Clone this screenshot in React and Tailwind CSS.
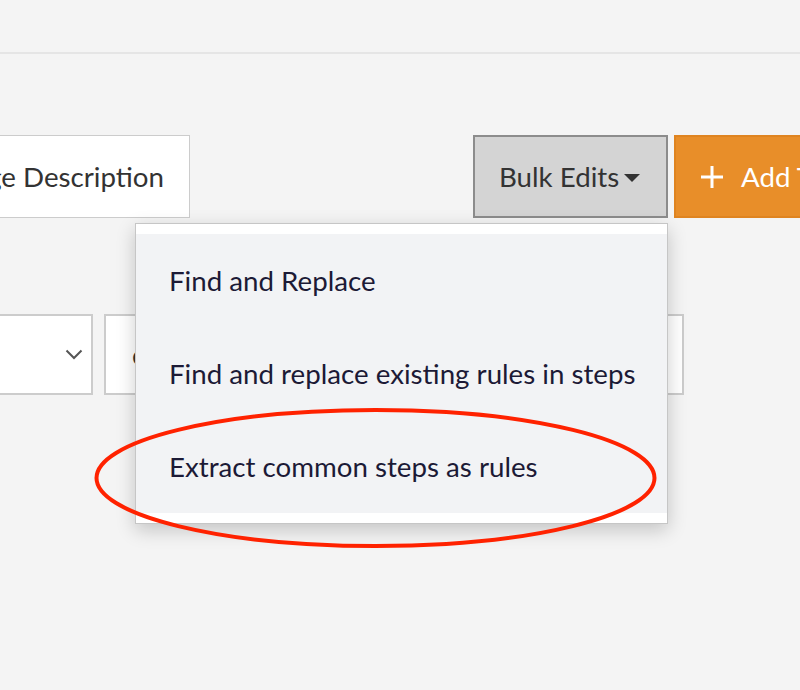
import React from "react";

const Caret = () => (
    <svg width="16" height="9" viewBox="0 0 16 9" className="ml-[5px] mt-[4px] shrink-0">
        <path d="M0 0 L16 0 L8 8 Z" fill="#333333" />
    </svg>
);

const Chevron = () => (
    <svg width="18" height="11" viewBox="0 0 18 11">
        <path d="M1.5 1.5 L9 9 L16.5 1.5" fill="none" stroke="#555555" strokeWidth="2" />
    </svg>
);

const Plus = () => (
    <svg width="22" height="22" viewBox="0 0 22 22" className="shrink-0">
        <path d="M11 0 V22 M0 11 H22" stroke="#ffffff" strokeWidth="3" />
    </svg>
);

const menuItems = [
    "Find and Replace",
    "Find and replace existing rules in steps",
    "Extract common steps as rules",
];

export default function App() {
    return (
        <div className="relative w-[800px] h-[690px] overflow-hidden bg-[#f4f4f4] font-['Lato','Open_Sans',sans-serif]">
            {/* Top bar */}
            <div className="h-[54px] border-b-2 border-[#e5e5e5]" />

            {/* Toolbar */}
            <div className="mt-[81px] flex items-start">
                <button className="shrink-0 ml-[-110px] w-[300px] h-[83px] bg-white border border-[#cccccc] flex items-center justify-end pr-[25px] text-[27.7px] text-[#333333] whitespace-nowrap">
                    Change Description
                </button>

                <div className="relative shrink-0 ml-[283px] z-10">
                    <button className="w-[195px] h-[83px] bg-[#d4d4d4] border-2 border-[#8c8c8c] flex items-center pl-[24px] text-[27.7px] text-[#333333] whitespace-nowrap">
                        Bulk Edits
                        <Caret />
                    </button>

                    {/* Dropdown */}
                    <div className="absolute top-[88px] right-0 w-[533px] bg-white border border-[#c6c6c6] py-[10px] shadow-[0_6px_18px_rgba(0,0,0,0.2)]">
                        <div className="bg-[#f2f3f5]">
                            {menuItems.map((item) => (
                                <div
                                    key={item}
                                    className="h-[93px] flex items-center pl-[33px] text-[27.7px] text-[#1c1a36] whitespace-nowrap"
                                >
                                    {item}
                                </div>
                            ))}
                        </div>
                    </div>
                </div>

                <button className="shrink-0 ml-[6px] w-[200px] h-[83px] bg-[#e88e29] border-2 border-[#df8420] flex items-center pl-[25px] text-[27.7px] text-white">
                    <Plus />
                    <span className="ml-[18px] whitespace-nowrap">Add Test</span>
                </button>
            </div>

            {/* Filters */}
            <div className="mt-[96px] flex items-start">
                <div className="shrink-0 ml-[-60px] w-[153px] h-[81px] bg-white border-2 border-[#cccccc] flex items-center justify-end pr-[8px]">
                    <Chevron />
                </div>
                <div className="shrink-0 ml-[11px] w-[580px] h-[81px] bg-white border-2 border-[#cccccc] flex items-center pl-[26px] text-[27.7px] text-[#333333]">
                    c
                </div>
            </div>

            {/* Annotation ellipse */}
            <svg className="absolute left-0 top-0 z-20 pointer-events-none" width="800" height="690">
                <ellipse cx="375.5" cy="478" rx="279" ry="68" fill="none" stroke="#ff2200" strokeWidth="4" />
            </svg>
        </div>
    );
}
